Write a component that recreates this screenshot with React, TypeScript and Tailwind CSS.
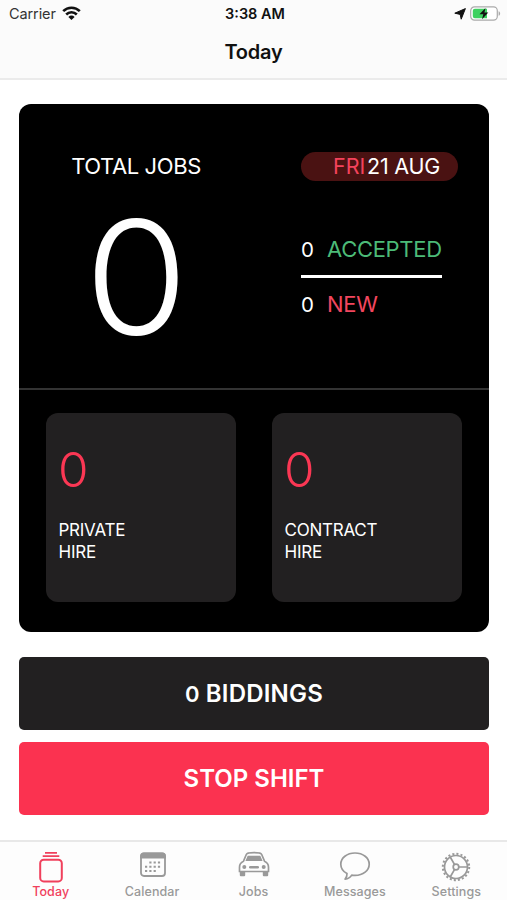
import type { ReactNode } from 'react'
import clsx from 'clsx'

const tabs = [
  { label: 'Today', icon: <TodayIcon />, active: true },
  { label: 'Calendar', icon: <CalendarIcon /> },
  { label: 'Jobs', icon: <CarIcon /> },
  { label: 'Messages', icon: <MessageIcon /> },
  { label: 'Settings', icon: <GearIcon /> },
]

export default function App() {
  return (
    <div className="flex h-[900px] w-[507px] flex-col overflow-hidden bg-white font-['Inter',sans-serif]">
      <Header />
      <main className="flex flex-1 flex-col pt-[23.5px] pr-[18px] pl-[19px]">
        <SummaryCard />
        <button className="mt-[25px] h-[73px] rounded-[5px] bg-[#222021] pt-px text-[24px] leading-none font-semibold text-white">
          <span className="text-[22px]">0</span>
          <span className="tracking-[0.2px]"> BIDDINGS</span>
        </button>
        <button className="mt-[12px] h-[73px] rounded-[5px] bg-[#fb3250] pt-px text-[24px] leading-none font-semibold text-white">
          <span>STOP SHIFT</span>
        </button>
      </main>
      <TabBar />
    </div>
  )
}

function Header() {
  return (
    <header className="h-[80px] border-b-2 border-[#ebebeb] bg-[#fbfbfb] text-[#111]">
      <div className="grid h-[27px] grid-cols-3 items-center pr-[6px] pl-[9px]">
        <div className="flex items-center gap-[6px] text-[14.5px] tracking-[-0.1px] text-[#333]">
          <span>Carrier</span>
          <WifiIcon />
        </div>
        <span className="text-center text-[14.5px] font-semibold">3:38 AM</span>
        <div className="flex items-center justify-end gap-[4px]">
          <LocationIcon />
          <BatteryIcon />
        </div>
      </div>
      <h1 className="mt-[11px] text-center text-[20px] leading-[28px] font-semibold tracking-[-0.2px]">Today</h1>
    </header>
  )
}

function SummaryCard() {
  return (
    <section className="h-[528.5px] rounded-[12px] bg-black text-white">
      <div className="flex h-[286px] justify-between border-b-2 border-[#333] pt-[48.5px] pr-[31px] pl-[52px]">
        <div className="flex w-[130px] flex-col items-center">
          <h2 className="text-[22px] leading-[29px] tracking-[-0.4px] whitespace-nowrap">TOTAL JOBS</h2>
          <div className="mt-[18px] scale-x-[1.07] text-[157px] leading-[157px] font-light">0</div>
        </div>
        <div className="w-[157px]">
          <div className="flex h-[29px] items-center rounded-full bg-[#4a1212] pl-[32px] text-[21.5px] whitespace-nowrap">
            <span className="w-[34px] text-[#f4435c]">FRI</span>
            <span className="tracking-[-0.2px]">21 AUG</span>
          </div>
          <div className="mt-[54px] w-[141px] border-b-[3px] border-white pb-[11px]">
            <Status count={0} label="ACCEPTED" className="text-[#4cbb78]" />
          </div>
          <div className="mt-[12px]">
            <Status count={0} label="NEW" className="text-[#f2465e]" />
          </div>
        </div>
      </div>
      <div className="flex justify-between pt-[23.5px] pr-[27px] pl-[27px]">
        <Tile count={0} label="PRIVATE" />
        <Tile count={0} label="CONTRACT" />
      </div>
    </section>
  )
}

function Status({ count, label, className }: { count: number, label: string, className: string }) {
  return (
    <div className="flex h-[29px] items-center whitespace-nowrap">
      <span className="w-[26px] pt-px text-[20.5px]">{count}</span>
      <span className={clsx('text-[22px] tracking-[-0.3px]', className)}>{label}</span>
    </div>
  )
}

function Tile({ count, label }: { count: number, label: string }) {
  return (
    <div className="h-[189px] w-[190px] rounded-[12px] bg-[#222021] pt-[33px] pl-[12px]">
      <div className="origin-left scale-x-[1.03] text-[48px] leading-[48px] text-[#fb3754] font-[350]">{count}</div>
      <p className="mt-[25px] pl-[0.5px] text-[17px] leading-[22px] tracking-[-0.25px]">
        {label}
        <br />
        HIRE
      </p>
    </div>
  )
}

function TabBar() {
  return (
    <nav className="flex h-[60px] border-t-2 border-[#e8e8e8] bg-[#fdfdfd]">
      {tabs.map(tab => (
        <Tab key={tab.label} active={tab.active} icon={tab.icon} label={tab.label} />
      ))}
    </nav>
  )
}

function Tab({ icon, label, active }: { icon: ReactNode, label: string, active?: boolean }) {
  return (
    <a
      className={clsx(
        'flex flex-1 flex-col items-center pt-[8px] text-[12.5px] leading-[16px] font-medium tracking-[0.1px]',
        active ? 'text-[#f0405c]' : 'text-[#999]',
      )}
    >
      <span className="flex h-[34px] items-center">{icon}</span>
      {label}
    </a>
  )
}

function WifiIcon() {
  return (
    <svg width="19" height="14" viewBox="0 0 19 14" className="-mt-[2px]" fill="none" stroke="#111" strokeWidth="2.6">
      <path d="M1.2 5.2a11.8 11.8 0 0 1 16.6 0" />
      <path d="M4.2 8.5a7.5 7.5 0 0 1 10.6 0" />
      <path d="M9.5 14 6.4 10.9a4.4 4.4 0 0 1 6.2 0Z" fill="#111" stroke="none" />
    </svg>
  )
}

function LocationIcon() {
  return (
    <svg width="12" height="12" viewBox="0 0 12 12" fill="#111">
      <path d="M11.4.6 7.2 11.2 6.2 6.4.8 5.2Z" stroke="#111" strokeWidth="1" strokeLinejoin="round" />
    </svg>
  )
}

function BatteryIcon() {
  return (
    <svg width="31" height="15" viewBox="0 0 31 15">
      <rect x=".7" y=".9" width="26.6" height="13.2" rx="3.8" fill="#fff" stroke="#aaa" strokeWidth="1.2" />
      <path d="M4.8 2.7H17v9.6H4.8a2 2 0 0 1-2-2V4.7a2 2 0 0 1 2-2Z" fill="#3ed160" />
      <path d="M28.6 5.2c2 .6 2 4 0 4.6Z" fill="#aaa" />
      <path d="m15.5 2-6 6.3h3.8L12 13.2l6.3-6.7h-3.9Z" fill="#111" />
    </svg>
  )
}

function TodayIcon() {
  return (
    <svg width="26" height="32" viewBox="0 0 26 32" fill="none" stroke="currentColor" strokeWidth="1.7">
      <path d="M7 1.8h12M4.7 5.1h16.6" />
      <rect x="2.2" y="8.8" width="21.6" height="21.6" rx="3.5" strokeWidth="2" />
    </svg>
  )
}

function CalendarIcon() {
  return (
    <svg width="28" height="28" viewBox="0 0 28 28" className="-mt-[4px] ml-px">
      <rect x="2" y="2.5" width="24" height="22.5" rx="3" fill="none" stroke="currentColor" strokeWidth="1.8" />
      <path d="M1.1 7.5V5.1a3.5 3.5 0 0 1 3.5-3.5h18.8a3.5 3.5 0 0 1 3.5 3.5v2.4Z" fill="currentColor" />
      <path
        d="M10.3 11.5h12M6 15.8h16.3M6 20.1h12"
        fill="none"
        stroke="currentColor"
        strokeWidth="2"
        strokeDasharray="2.2 2.1"
      />
    </svg>
  )
}

function CarIcon() {
  return (
    <svg width="32" height="28" viewBox="0 0 32 28" className="-mt-[4px]" fill="currentColor">
      <path
        d="M5.5 10.2 8.3 3.5C9 2 10 1.6 16 1.6s7 .4 7.7 1.9l2.8 6.7c2.8 1.2 4 3 4 6v4.3h-29v-4.3c0-3 1.2-4.8 4-6Z"
        fill="none"
        stroke="currentColor"
        strokeWidth="1.7"
      />
      <path d="M9.7 4.7h12.6l2.3 5.2H7.4ZM1.8 20.5h5.4v3.8a1 1 0 0 1-1 1H2.8a1 1 0 0 1-1-1ZM24.8 20.5h5.4v3.8a1 1 0 0 1-1 1h-3.4a1 1 0 0 1-1-1Z" />
      <rect x="11" y="15" width="10" height="2.6" rx="1.3" />
      <circle cx="6.3" cy="16" r="2" />
      <circle cx="25.7" cy="16" r="2" />
    </svg>
  )
}

function MessageIcon() {
  return (
    <svg width="32" height="30" viewBox="0 0 32 30" className="-mt-[2px]" fill="none" stroke="currentColor" strokeWidth="1.7">
      <path
        d="M16 2C7.9 2 1.8 7 1.8 13.2c0 3.9 2.4 7.3 6.2 9.3.1 2.3-.5 4.2-1.9 5.6 3-.3 5.2-1.7 6.6-4 1 .2 2.1.3 3.3.3 8.1 0 14.2-5 14.2-11.2S24.1 2 16 2Z"
        strokeLinejoin="round"
      />
    </svg>
  )
}

function GearIcon() {
  return (
    <svg width="30" height="30" viewBox="0 0 30 30" fill="none" stroke="currentColor">
      <circle cx="15" cy="15" r="13.2" strokeWidth="2" strokeDasharray="2.07 2.077" />
      <circle cx="15" cy="15" r="11.5" strokeWidth="1.7" />
      <circle cx="15" cy="15" r="2.8" strokeWidth="1.7" />
      <path d="M17.8 15h8.7M13.6 12.6 9.2 5M13.6 17.4 9.2 25" strokeWidth="1.7" />
    </svg>
  )
}
